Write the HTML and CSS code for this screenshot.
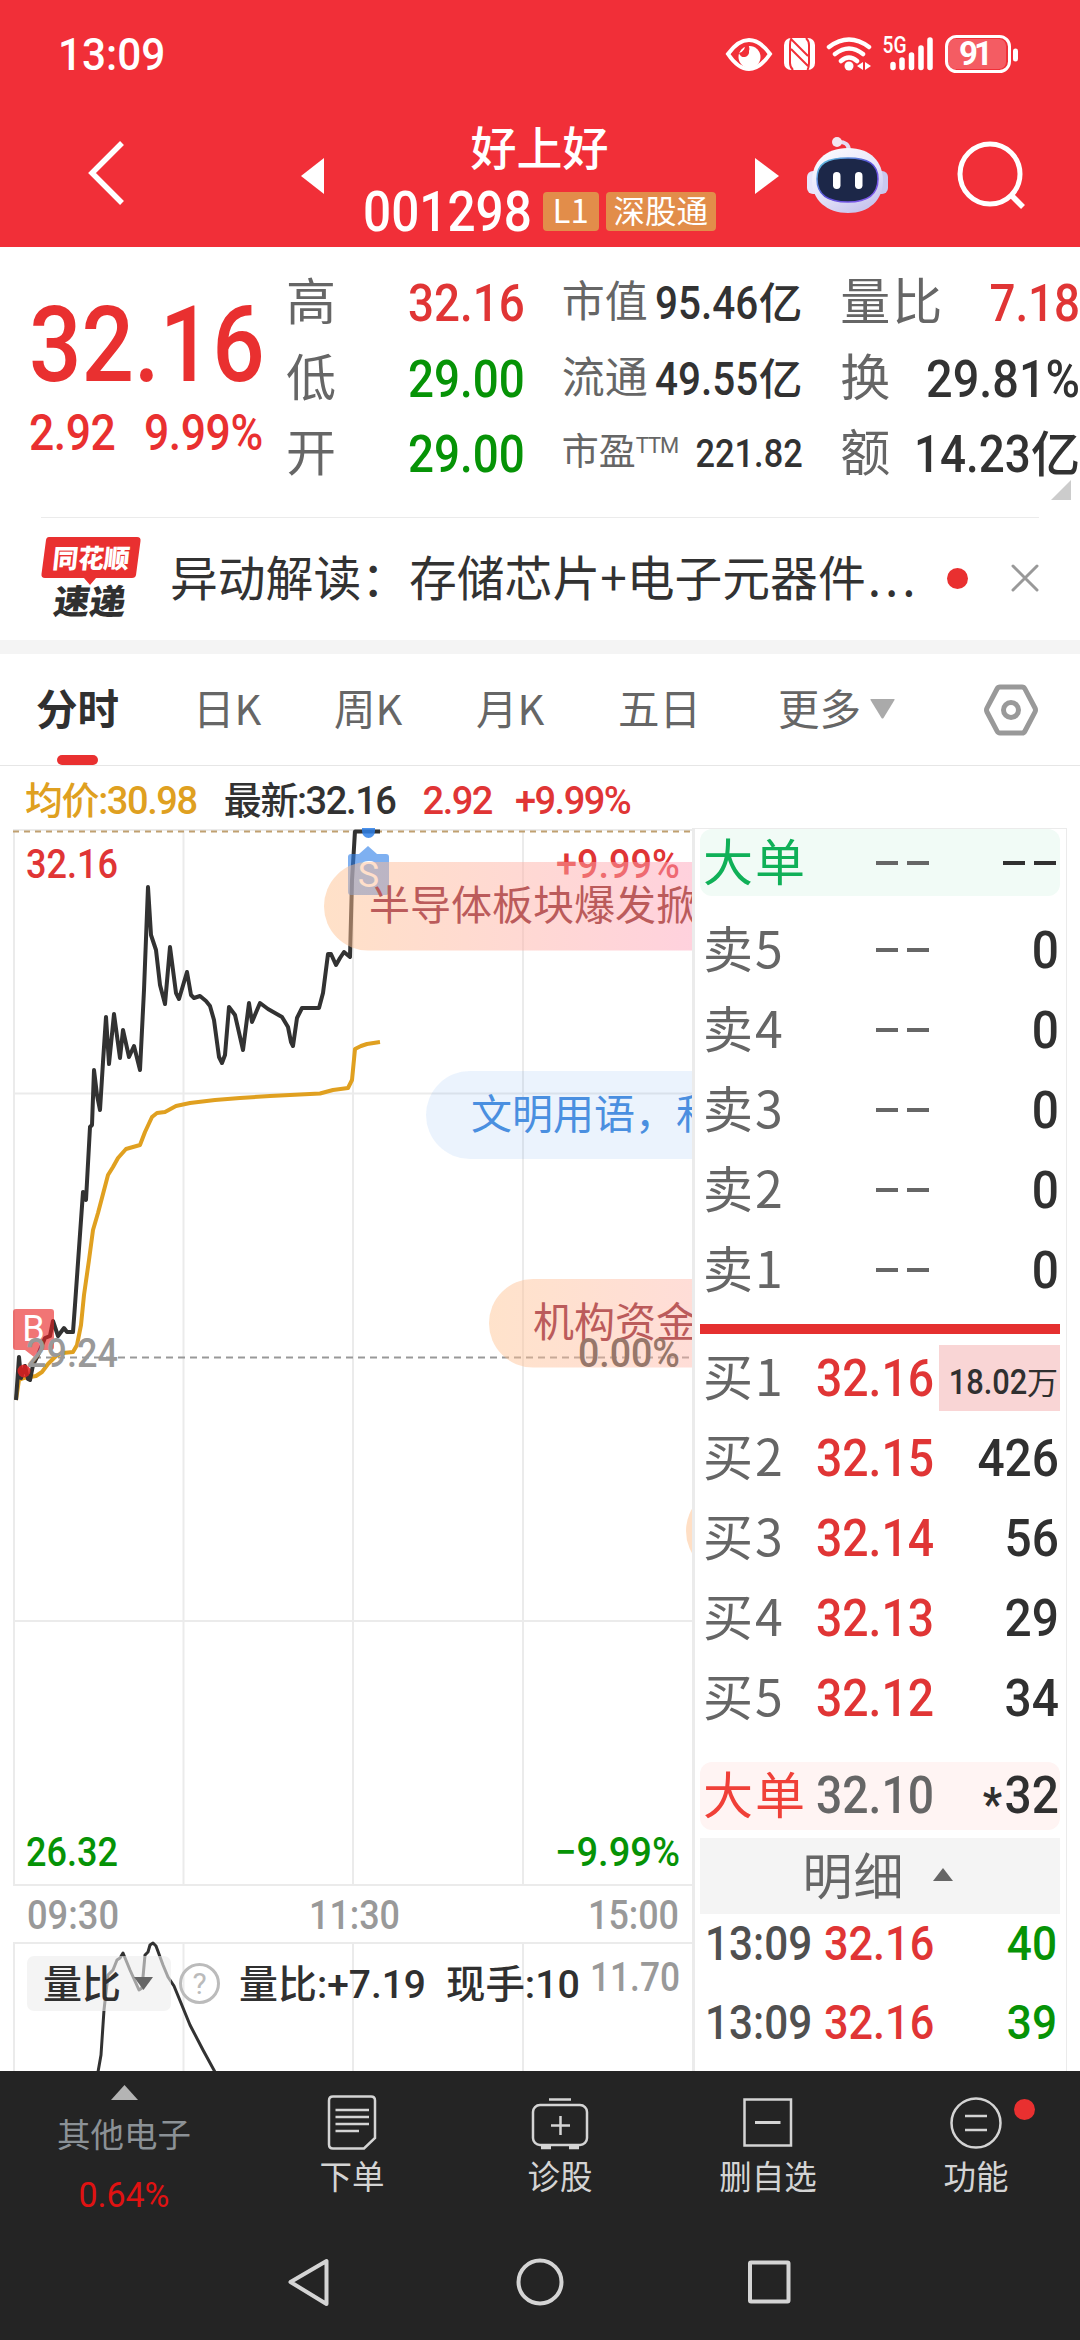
FILE: index.html
```html
<!DOCTYPE html>
<html lang="zh-CN">
<head>
<meta charset="utf-8">
<title>好上好 001298</title>
<link rel="stylesheet" href="styles.css">
</head>
<body>
<div class="phone">
  <header class="top">
    <div class="status">
      <span class="clock">13:09</span>
      <svg class="status-icons" width="296" height="44" viewBox="724 32 296 44" fill="none" stroke="#fff">
        <path d="M728 54Q738 40 749 40T770 54Q760 69 749 69T728 54Z" stroke-width="4"/>
        <circle cx="749.500" cy="57" r="11" fill="#fff" stroke="none"/>
        <path d="M745 43a8 8 0 0 1-6 10a5 5 0 0 0 10-2a7 7 0 0 0-3-8z" fill="#f12f38" stroke="none"/>
        <rect x="784" y="38" width="31" height="32" rx="7" fill="#fff" stroke="none"/>
        <path d="M791.500 38q-1.500 3-1.500 7v18q0 4 3 7M807.500 70q1.500-3 1.500-7V45q0-4-3-7M791 39l17 17M791 49l17 17" stroke="#f12f38" stroke-width="2"/>
        <path d="M829 47q20-15 40 0M835 54q14-11 28 0M841 61q8-7 16 0" stroke-width="4.500" stroke-linecap="round"/>
        <circle cx="849" cy="66" r="4.500" fill="#fff" stroke="none"/>
        <path d="M863 62v8l-6-4zM865 62v8l6-4z" fill="#fff" stroke="none"/>
        <text class="net" x="882.500" y="53" textLength="24" lengthAdjust="spacingAndGlyphs">5G</text>
        <path d="M893 64.500v3M902 60v7.500M911.500 55v12.500M921 48v19.500M930 40v27.500" stroke-width="5.500" stroke-linecap="round"/>
        <rect x="948" y="39" width="58" height="30" rx="7" fill="#fff" fill-opacity=".22" stroke="none"/>
        <rect x="946.500" y="36.500" width="63" height="35" rx="10" stroke-width="3"/>
        <path d="M1015.500 51v8" stroke-width="5" stroke-linecap="round"/>
        <text class="batt" x="959" y="65" textLength="34">91</text>
      </svg>
    </div>
    <nav class="titlebar">
      <svg class="back" width="40" height="70" viewBox="0 0 40 70" fill="none" stroke="#fff" stroke-width="5.500"><path d="M36 5L6 35L36 65"/></svg>
      <svg class="prev" width="23" height="36" viewBox="0 0 23 36"><path d="M23 0v36L0 18z" fill="#fff"/></svg>
      <div class="title">
        <h1>好上好</h1>
        <div class="code"><b>001298</b><span class="badge">L1</span><span class="badge">深股通</span></div>
      </div>
      <svg class="next" width="24" height="36" viewBox="0 0 24 36"><path d="M0 0v36l24-18z" fill="#fff"/></svg>
      <svg class="robot" width="82" height="78" viewBox="0 0 82 78">
        <defs>
          <linearGradient id="head" x1="0" y1="0" x2="0.600" y2="1"><stop offset="0" stop-color="#fff"/><stop offset=".6" stop-color="#e6e4fa"/><stop offset="1" stop-color="#c9c6ee"/></linearGradient>
          <linearGradient id="rim" x1="0" y1="0" x2="1" y2="1"><stop offset="0" stop-color="#5fd0e0"/><stop offset=".5" stop-color="#5a4fd8"/><stop offset="1" stop-color="#8a5cf0"/></linearGradient>
        </defs>
        <path d="M30 6q12-1 12 9" fill="none" stroke="#e4dcf2" stroke-width="4"/><circle cx="30" cy="6" r="5" fill="#f3e6f0"/>
        <rect x="0" y="35" width="14" height="23" rx="6" fill="#e8e6fb"/><rect x="67" y="35" width="14" height="23" rx="6" fill="#c9c8ee"/>
        <path d="M41 12C64 12 76 26 76 45S62 77 41 77S5 64 5 45S18 12 41 12Z" fill="url(#head)"/>
        <path d="M41 22C61 22 71 28 71 43S61 66 41 66S10 59 10 43S20 22 41 22Z" fill="#1c2748" stroke="url(#rim)" stroke-width="1.500"/>
        <rect x="26" y="36" width="7.500" height="17" rx="3.700" fill="#fff"/><rect x="48" y="36" width="7.500" height="17" rx="3.700" fill="#fff"/>
      </svg>
      <svg class="search" width="70" height="72" viewBox="0 0 70 72" fill="none" stroke="#fff" stroke-width="5"><circle cx="33" cy="35" r="30"/><path d="M54 56l12 12" stroke-width="5.500"/></svg>
    </nav>
  </header>

  <section class="quote">
    <div class="price">
      <div class="last">32.16</div>
      <div class="change"><span>2.92</span><span>9.99%</span></div>
    </div>
    <dl class="col a">
      <div><dt>高</dt><dd class="up"><span class="n">32.16</span></dd></div>
      <div><dt>低</dt><dd class="down"><span class="n">29.00</span></dd></div>
      <div><dt>开</dt><dd class="down"><span class="n">29.00</span></dd></div>
    </dl>
    <dl class="col b">
      <div><dt>市值</dt><dd><span class="n">95.46</span><i>亿</i></dd></div>
      <div><dt>流通</dt><dd><span class="n">49.55</span><i>亿</i></dd></div>
      <div class="pe"><dt>市盈<sup>TTM</sup></dt><dd><span class="n">221.82</span></dd></div>
    </dl>
    <dl class="col c">
      <div><dt>量比</dt><dd class="up"><span class="n">7.18</span></dd></div>
      <div><dt>换</dt><dd><span class="n">29.81%</span></dd></div>
      <div><dt>额</dt><dd><span class="n">14.23</span><i>亿</i></dd></div>
    </dl>
    <svg class="corner" width="20" height="20" viewBox="0 0 20 20"><path d="M20 0v20H0z" fill="#ccc"/></svg>
  </section>

  <section class="news">
    <svg width="100" height="84" viewBox="0 0 100 84">
      <path d="M8 1H96q4 0 3.500 4L95 39q-.5 3-4 3H55l-6 7-6-7H4q-4 0-3.500-4L5 4q.5-3 3-3z" fill="#e93030"/>
      <text class="logo-a" x="11" y="32" textLength="77" lengthAdjust="spacingAndGlyphs">同花顺</text>
      <text class="logo-b" x="11" y="78" textLength="72" lengthAdjust="spacingAndGlyphs">速递</text>
    </svg>
    <p>异动解读：存储芯片+电子元器件<span>...</span></p>
    <span class="dot"></span>
    <svg width="28" height="28" viewBox="0 0 28 28" stroke="#999" stroke-width="3" stroke-linecap="round"><path d="M2 2l24 24M26 2L2 26"/></svg>
  </section>

  <nav class="tabs">
    <span class="on">分时</span><span>日K</span><span>周K</span><span>月K</span><span>五日</span>
    <span class="more">更多<svg width="25" height="20" viewBox="0 0 25 20"><path d="M1 0h23q1 0 .5 1L13.500 19q-1 1-2 0L.5 1Q0 0 1 0z" fill="#aaa"/></svg></span>
    <svg class="gear" width="56" height="54" viewBox="0 0 56 54" fill="none" stroke="#999" stroke-width="5" stroke-linejoin="round"><path d="M17 4h22q2 0 3 2l10 19q1 2 0 4L42 48q-1 2-3 2H17q-2 0-3-2L4 29q-1-2 0-4L14 6q1-2 3-2z"/><circle cx="28" cy="27" r="7.500"/></svg>
  </nav>

  <main class="market">
    <section class="left">
      <div class="legend"><span class="avg">均价:30.98</span><span class="now">最新:32.16</span><span class="up">2.92</span><span class="up">+9.99%</span></div>
      <svg class="chart" width="696" height="1249" viewBox="0 822 696 1249">
        <defs>
          <linearGradient id="hot" gradientUnits="userSpaceOnUse" x1="324" y1="0" x2="693" y2="0"><stop offset="0" stop-color="#ffc08c"/><stop offset="1" stop-color="#ffa0b8"/></linearGradient>
          <linearGradient id="hot2" gradientUnits="userSpaceOnUse" x1="489" y1="0" x2="760" y2="0"><stop offset="0" stop-color="#ffc08c"/><stop offset="1" stop-color="#ffb0b0"/></linearGradient>
          <clipPath id="plot"><rect x="0" y="822" width="693" height="1249"/></clipPath>
        </defs>
        <g stroke="#ebebeb" stroke-width="2" fill="none">
          <path d="M14 830V1884M183.500 830V1884M353 830V1884M523 830V1884M13 830H693M13 1093.500H693M13 1621H693M13 1885H693"/>
          <path d="M14 1942V2071M183.500 1942V2071M353 1942V2071M523 1942V2071M13 1943H693"/>
        </g>
        <path d="M13 831.500H693" stroke="#c0a070" stroke-width="2" stroke-dasharray="6 5"/>
        <path d="M34 1357.500H693" stroke="#999" stroke-width="2" stroke-dasharray="7 5"/>
        <path class="line avg-line" d="M16 1400L19 1380L24 1378L36 1376L42 1372L48 1364L56 1356L63 1353L73 1352L77 1345L81 1325L84 1295L89 1260L93 1230L98 1213L103 1194L108 1175L113 1167L118 1158L126 1149L140 1145L145 1132L152 1117L157 1113L165 1112L176 1106L190 1103L215 1100L240 1098L270 1096L320 1093.500L333 1090L348 1088L352 1080L355 1049L361 1046L367 1044L380 1042"/>
        <path class="line" d="M16 1400L19 1357L21 1378L25 1366L28 1379L30 1380L33 1365L38 1355L42 1345L45 1338L50 1336L53 1321L58 1336L64 1328L67 1332L73 1332L75 1305L83 1192L86 1200L90 1127L92 1125L94 1070L97 1095L100 1110L103 1062L106 1017L109 1064L114 1014L120 1058L123 1030L129 1057L134 1046L140 1070L144 990L148 887L151 935L156 950L160 985L165 1004L170 947L176 993L179 999L187 972L191 995L194 998L200 996L206 1001L210 1006L214 1020L219 1057L222 1063L225 1055L229 1007L235 1015L243 1050L249 1003L252 1022L260 1003L268 1009L275 1013L282 1017L288 1027L291 1042L293 1046L297 1018L302 1008L319 1008L323 993L328 954L331 954L336 965L340 958L344 952L350 957L352 880L355 831.500L380 831.500"/>
        <g class="axis">
          <text class="up" x="26" y="878" textLength="92" lengthAdjust="spacingAndGlyphs">32.16</text>
          <text class="up" x="556" y="878" textLength="124" lengthAdjust="spacingAndGlyphs">+9.99%</text>
          <text class="down" x="26" y="1866" textLength="92" lengthAdjust="spacingAndGlyphs">26.32</text>
          <text class="down" x="555" y="1866" textLength="125" lengthAdjust="spacingAndGlyphs">−9.99%</text>
          <text x="27" y="1929" textLength="92" lengthAdjust="spacingAndGlyphs">09:30</text>
          <text x="309" y="1929" textLength="91" lengthAdjust="spacingAndGlyphs">11:30</text>
          <text x="588" y="1929" textLength="91" lengthAdjust="spacingAndGlyphs">15:00</text>
        </g>
        <g>
          <path d="M351 854h8l9-8 9 8h9q3 0 3 3v35q0 3-3 3h-35q-3 0-3-3v-35q0-3 3-3z" fill="#2f80e8" fill-opacity=".62"/>
          <path d="M362 828h13v3a6.500 7 0 0 1-13 0z" fill="#2f80e8" fill-opacity=".85"/>
          <text class="mark" x="368.500" y="887">S</text>
          <path d="M16 1309h35q3 0 3 3v35q0 3-3 3h-8l-9 7-9-7h-9q-3 0-3-3v-35q0-3 3-3z" fill="#e82020" fill-opacity=".62"/>
          <circle cx="24" cy="1371" r="6.500" fill="#e02020" fill-opacity=".85"/>
          <text class="mark" x="33.500" y="1341">B</text>
        </g>
        <g class="axis">
          <text x="26" y="1367" textLength="92" lengthAdjust="spacingAndGlyphs">29.24</text>
        </g>
        <g clip-path="url(#plot)" class="bullet">
          <rect x="324" y="862" width="480" height="88.500" rx="44" fill="url(#hot)" fill-opacity=".48"/>
          <text x="369" y="920">半导体板块爆发掀</text>
          <rect x="426" y="1071" width="480" height="88" rx="44" fill="#4a90f0" fill-opacity=".11"/>
          <text class="blue" x="471" y="1129">文明用语，和</text>
          <rect x="489" y="1279" width="480" height="88.500" rx="44" fill="url(#hot2)" fill-opacity=".45"/>
          <text x="533" y="1337">机构资金</text>
          <rect x="686" y="1487" width="480" height="88" rx="44" fill="#ffc08c" fill-opacity=".5"/>
        </g>
        <g class="axis"><text class="zero" x="578" y="1367" textLength="102" lengthAdjust="spacingAndGlyphs">0.00%</text></g>
        <path class="line thin" d="M98 2072L101 2055L104 2010L108 1975L113 1970L117 1960L120 1958L123 1953L130 1970L139 1990L142 1988L145 1955L148 1952L150 1945L153 1943L156 1946L163 1965L168 1977L174 1986L181 2003L190 2025L203 2050L215 2072"/>
        <rect x="27" y="1956" width="144" height="55" rx="7" fill="#ececec" fill-opacity=".6"/>
        <path d="M134 1977h19l-9.500 13z" fill="#666"/>
        <circle cx="199.500" cy="1983.500" r="19" fill="none" stroke="#bbb" stroke-width="3"/>
        <text class="help" x="199.500" y="1994">?</text>
        <g class="sub">
          <text x="43" y="1998">量比</text>
          <text x="239" y="1998" textLength="187" lengthAdjust="spacingAndGlyphs">量比:+7.19</text>
          <text x="446" y="1998" textLength="134" lengthAdjust="spacingAndGlyphs">现手:10</text>
        </g>
        <g class="axis"><text x="590" y="1991" textLength="90" lengthAdjust="spacingAndGlyphs">11.70</text></g>
      </svg>
    </section>

    <aside class="book">
      <div class="row big sell"><span>大单</span><i class="dash"></i><i class="dash dark"></i></div>
      <div class="row"><span>卖5</span><i class="dash"></i><b>0</b></div>
      <div class="row"><span>卖4</span><i class="dash"></i><b>0</b></div>
      <div class="row"><span>卖3</span><i class="dash"></i><b>0</b></div>
      <div class="row"><span>卖2</span><i class="dash"></i><b>0</b></div>
      <div class="row"><span>卖1</span><i class="dash"></i><b>0</b></div>
      <div class="split"></div>
      <div class="row"><span>买1</span><em>32.16</em><div class="hl"><b>18.02</b><i>万</i></div></div>
      <div class="row"><span>买2</span><em>32.15</em><b>426</b></div>
      <div class="row"><span>买3</span><em>32.14</em><b>56</b></div>
      <div class="row"><span>买4</span><em>32.13</em><b>29</b></div>
      <div class="row"><span>买5</span><em>32.12</em><b>34</b></div>
      <div class="row big buy"><span>大单</span><em>32.10</em><b><small>*</small>32</b></div>
      <div class="detail">明细<svg width="20" height="13" viewBox="0 0 20 13"><path d="M10 0l10 13H0z" fill="#666"/></svg></div>
      <div class="tick"><span>13:09</span><em>32.16</em><b>40</b></div>
      <div class="tick"><span>13:09</span><em>32.16</em><b>39</b></div>
    </aside>
  </main>

  <footer class="bottom">
    <div class="actions">
      <div class="sector"><svg width="27" height="15" viewBox="0 0 27 15"><path d="M13.500 0L27 15H0z" fill="#b4b4b4"/></svg><span>其他电子</span><b>0.64%</b></div>
      <div class="act"><svg width="60" height="56" viewBox="0 0 60 56" fill="none" stroke="#d4d4d4" stroke-width="2.500"><path d="M11 1.500H49q4 0 4 4V43L42 53.500H11q-4 0-4-4v-44q0-4 4-4z"/><path d="M13.500 15h33.500M13.500 22h33.500M13.500 29h33.500M13.500 36h23.500"/></svg><span>下单</span></div>
      <div class="act"><svg width="60" height="56" viewBox="0 0 60 56" fill="none" stroke="#d4d4d4" stroke-width="2.500"><rect x="3" y="10" width="54" height="40" rx="7"/><path d="M19 4.500h22M21 30.500h19M30.500 21v19"/><path d="M11 52.500h10M39 52.500h10" stroke-width="3.500"/></svg><span>诊股</span></div>
      <div class="act"><svg width="60" height="56" viewBox="0 0 60 56" fill="none" stroke="#d4d4d4" stroke-width="2.500"><path d="M6.500 4.500h46.500v46H6.500z"/><path d="M17 27.500h25.500" stroke-width="3"/></svg><span>删自选</span></div>
      <div class="act"><svg width="60" height="56" viewBox="0 0 60 56" fill="none" stroke="#d4d4d4" stroke-width="2.500"><circle cx="30" cy="28" r="24.500"/><path d="M19 21h22M19 35h22"/></svg><i class="dot"></i><span>功能</span></div>
    </div>
    <svg class="sysnav" width="1080" height="60" viewBox="0 0 1080 60" fill="none" stroke="#d4d4d4" stroke-width="4" stroke-linejoin="round"><path d="M326.500 9v43L290.500 30z"/><circle cx="540" cy="30" r="21.500"/><rect x="750" y="10.500" width="38.500" height="39" rx="1"/></svg>
  </footer>
</div>
</body>
</html>
```
FILE: styles.css
```css
* { box-sizing: border-box; margin: 0; padding: 0; }
body { width: 1080px; height: 2340px; overflow: hidden; background: #fff; color: #323232; font-family: "Noto Sans CJK SC", sans-serif; }
i, em { font-style: normal; }
svg { display: block; flex: none; }
.phone { width: 1080px; height: 2340px; display: flex; flex-direction: column; }
.up { color: #e03535; fill: #e03535; }
.down { color: #069306; fill: #069306; }

.top { height: 247px; background: #f12f38; color: #fff; }
.status { height: 108px; display: flex; justify-content: space-between; padding: 0 60px 0 58px; align-items: center; }
.clock { font: 500 45px/1 Roboto, sans-serif; transform: scaleX(.94); transform-origin: left; }
.status-icons text { fill: #fff; stroke: none; font-family: Roboto, sans-serif; }
.status-icons .net { font-size: 23px; font-weight: 500; }
.status-icons .batt { font-size: 33px; font-weight: 700; }
.titlebar { height: 139px; display: flex; align-items: flex-start; padding-left: 86px; }
.back { margin-top: 30px; }
.prev { margin: 50px 0 0 175px; }
.title { width: 431px; display: flex; flex-direction: column; align-items: center; }
.title h1 { font-size: 46px; font-weight: 500; line-height: 60px; margin-top: 7px; }
.code { display: flex; align-items: center; height: 40px; gap: 7px; margin-top: 16px; }
.code b { font: 500 55px/40px Roboto, sans-serif; transform: scaleX(.9); transform-origin: left; margin: 2px -15px 0 0; }
.badge { height: 39px; padding: 0 8px; border-radius: 4px; background: #e28d4a; font-size: 31.500px; line-height: 35px; }
.badge:nth-child(2) { font-size: 33px; width: 56px; padding: 0 10px; }
.next { margin-top: 50px; }
.robot { margin: 28px 0 0 28px; }
.search { margin: 31px 0 0 68px; }

.quote { position: relative; height: 270px; display: flex; padding-top: 18px; }
.price { width: 286px; padding: 29px 0 0 29px; color: #e93030; font-family: Roboto, sans-serif; font-weight: 500; white-space: nowrap; }
.last { font-size: 105px; line-height: 104px; transform: scaleX(.88); transform-origin: left; }
.change { display: flex; gap: 32px; font-size: 50px; line-height: 66px; margin-top: 2px; letter-spacing: -.5px; transform: scaleX(.89); transform-origin: left; }
.col div { height: 75.500px; display: flex; align-items: center; justify-content: space-between; white-space: nowrap; }
.col dt { font-size: 50px; letter-spacing: 2px; color: #666; line-height: 75px; margin-top: -8px; }
.col dd { font: 500 52px/75px Roboto, "Noto Sans CJK SC", sans-serif; margin-top: 2px; }
.col i { font-family: "Noto Sans CJK SC", sans-serif; font-weight: 500; font-size: .95em; line-height: 1; }
.n { display: inline-block; transform: scaleX(.88); transform-origin: right; }
.a { width: 239px; }
.b { width: 241px; margin-left: 37px; }
.b dt { font-size: 43px; letter-spacing: 0; }
.b dd { font-size: 46px; margin-left: -40px; }
.b .pe dt { font-size: 37px; }
.b .pe dd { font-size: 39px; }
.b sup { font: 400 22px/1 Roboto, sans-serif; vertical-align: 12px; letter-spacing: -1px; }
.c { width: 240px; margin-left: 38px; }
.c dd { margin-left: -40px; }
.c div:nth-child(2) .n { transform: scaleX(.9); }
.corner { position: absolute; right: 9px; bottom: 17px; }

.news { height: 123px; margin: 0 41px; border-top: 1px solid #ebebeb; display: flex; align-items: center; }
.news p { flex: none; font-size: 47.800px; line-height: 60px; width: 745px; margin: -6px 0 0 29px; white-space: nowrap; }
.news p span { letter-spacing: 4px; margin-left: 2px; }
.logo-a { fill: #fff; font-weight: 900; font-size: 26px; transform: skewX(-6deg); transform-origin: 50px 30px; }
.logo-b { fill: #303030; font-weight: 900; font-size: 34px; transform: skewX(-8deg); transform-origin: 50px 80px; }
.dot { flex: none; width: 21px; height: 21px; border-radius: 50%; background: #e93030; }
.news .dot { margin: -2px 43px 0 32px; }
.news > svg { margin-top: -2px; }

.tabs { height: 126px; border-top: 14px solid #f4f4f4; border-bottom: 1px solid #e6e6e6; display: flex; align-items: center; font-size: 41.500px; line-height: 60px; color: #666; padding-left: 36px; }
.tabs span { width: 142px; margin-top: -5px; white-space: nowrap; }
.tabs span:nth-child(2) { margin-left: 16px; width: 141px; }
.tabs .on { position: relative; color: #303030; font-weight: 700; width: 141px; }
.tabs .on::after { content: ""; position: absolute; left: 21px; top: 78px; width: 41px; height: 10px; border-radius: 5px; background: #e93030; }
.tabs .more { display: flex; align-items: center; gap: 9px; width: 205px; margin-left: 18px; }
.tabs .more svg { margin-top: 3px; }

.market { height: 1305px; display: flex; }
.left { width: 692px; overflow: hidden; }
.legend { height: 56px; padding-left: 25px; display: flex; gap: 27px; align-items: center; font: 500 38px/56px Roboto, "Noto Sans CJK SC", sans-serif; letter-spacing: -1.400px; white-space: nowrap; margin-top: 7px; margin-bottom: -7px; }
.legend .up { letter-spacing: -1.500px; }
.legend .up:last-child { margin-left: -4px; }
.avg { color: #dfa020; }
.line { fill: none; stroke: #323232; stroke-width: 4; stroke-linejoin: round; }
.avg-line { stroke: #e0a020; }
.thin { stroke-width: 3; }
.axis text { font: 500 40px Roboto, sans-serif; fill: #999; }
.axis .up { fill: #e03535; }
.axis .down { fill: #069306; }
.axis .zero { fill: #97776a; }
.mark { font: 400 36px Roboto, sans-serif; fill: #fff; text-anchor: middle; }
.bullet text { font-size: 41px; fill: #bb5b5b; }
.bullet .blue { fill: #4a8fe0; }
.sub text { font: 500 39px Roboto, "Noto Sans CJK SC", sans-serif; fill: #303030; }
.help { font: 400 30px Roboto, sans-serif; fill: #bbb; text-anchor: middle; }

.book { width: 375px; margin-top: 62px; border: solid #ebebeb; border-width: 1px 1px 0 3px; padding: 0 6px 0 5px; }
.row { height: 80px; display: grid; grid-template-columns: 112px 120px 1fr; align-items: center; padding: 0 1px 0 3px; font-size: 50px; line-height: 66px; color: #666; }
.row span { margin-top: -8px; white-space: nowrap; letter-spacing: 2px; }
.row em, .row b { font: 500 52px/66px Roboto, sans-serif; white-space: nowrap; margin-top: 2px; }
.row em { color: #e03535; transform: translateX(1px) scaleX(.89); transform-origin: left; }
.row b { color: #303030; text-align: right; transform: scaleX(.92); transform-origin: right; }
.big { height: 67px; border-radius: 12px; }
.sell { background: #f1fbf6; margin: 0 0 14px; }
.sell span { color: #10b058; }
.buy { background: #fff4f3; margin: 24px 0 8px; height: 68px; }
.buy span { color: #f04038; }
.buy em { color: #666; }
.buy em, .buy b { margin-top: -1px; }
.buy small { font-size: 46px; line-height: 1; vertical-align: -7px; font-weight: 700; margin-right: 3px; }
.dash { justify-self: end; width: 53px; height: 4px; margin-right: 6px; background: linear-gradient(90deg, #666 22px, transparent 22px 31px, #666 31px); }
.dark { margin-right: 3px; background: linear-gradient(90deg, #303030 22px, transparent 22px 31px, #303030 31px); }
.split { height: 10px; margin: 14px 0 4px; background: #e53030; }
.hl { background: #f9d5d5; justify-self: end; width: 121px; height: 66px; margin-right: -1px; padding-right: 2px; display: flex; justify-content: flex-end; align-items: center; color: #303030; white-space: nowrap; }
.row .hl b { font-size: 35px; line-height: 66px; margin-top: 10px; transform: scaleX(.88); }
.hl i { font-size: 31px; line-height: 1; margin-top: 4px; }
.detail { height: 76px; background: #f4f4f4; display: flex; justify-content: center; align-items: center; gap: 28px; font-size: 50px; letter-spacing: 1px; line-height: 70px; color: #666; padding: 0 5px 7px 0; }
.detail svg { margin-top: 4px; }
.tick { height: 79px; display: grid; grid-template-columns: 119px 120px 1fr; padding: 0 3px 0 5px; font: 500 48px/60px Roboto, sans-serif; color: #505050; white-space: nowrap; }
.tick span { transform: scaleX(.88); transform-origin: left; }
.tick em { color: #e03535; transform: scaleX(.9); transform-origin: left; }
.tick b { color: #069306; font-weight: 500; text-align: right; transform: scaleX(.92); transform-origin: right; }

.bottom { height: 269px; background: #242424; color: #d4d4d4; }
.actions { height: 181px; display: grid; grid-template-columns: 248px repeat(4, 208px); }
.sector { display: flex; flex-direction: column; align-items: center; padding-top: 14px; }
.sector span { font-size: 33.500px; line-height: 48px; color: #8b9196; margin-top: 9px; }
.sector b { font: 400 35px/48px Roboto, sans-serif; color: #e01212; margin-top: 15px; transform: scaleX(.97); }
.act { position: relative; display: flex; flex-direction: column; align-items: center; padding-top: 24px; }
.act span { font-size: 32.500px; line-height: 48px; }
.act .dot { position: absolute; left: 142px; top: 28px; }
```
